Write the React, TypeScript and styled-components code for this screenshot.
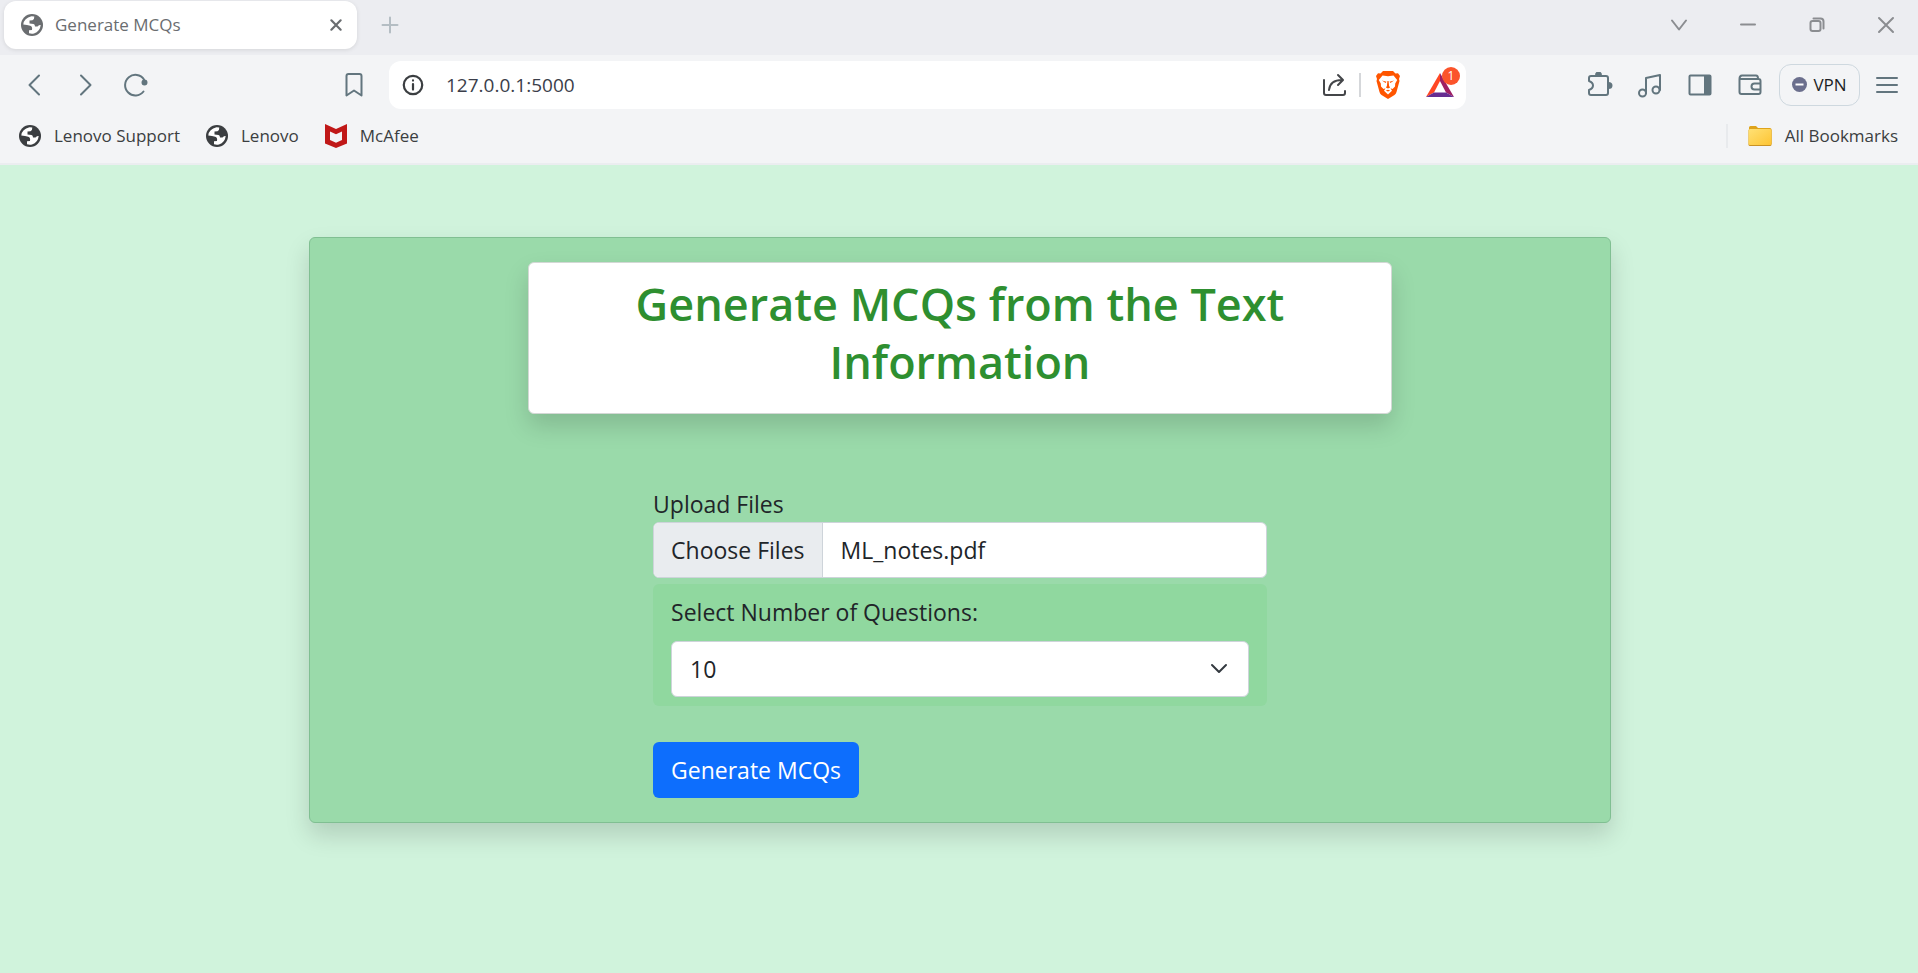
import React, { useState } from 'react';
import styled, { createGlobalStyle } from 'styled-components';

const GlobalStyle = createGlobalStyle`
  *, *::before, *::after { box-sizing: border-box; }
  html, body { margin: 0; min-height: 100%; background: #d0f3dc; }
  body, button, input, select { font-family: 'Open Sans', 'Noto Sans', sans-serif; }
  h1, form { margin: 0; }
`;

const Window = styled.div`
  min-height: 100vh;
  display: flex;
  flex-direction: column;
  color: #212529;
`;

const TabStrip = styled.div`
  display: flex;
  align-items: flex-start;
  justify-content: space-between;
  height: 55px;
  padding: 1px 7px 0 4px;
  background: #ecedf1;
`;

const Row = styled.div<{ $gap?: number }>`
  display: flex;
  align-items: center;
  gap: ${(p) => p.$gap ?? 0}px;
`;

const Tab = styled.div`
  display: flex;
  align-items: center;
  width: 353px;
  height: 48px;
  padding: 0 10px 0 17px;
  gap: 12px;
  border-radius: 12px;
  background: #fff;
  box-shadow: 0 1px 4px rgba(0, 0, 0, 0.1);
  color: #6a6d70;
  font-size: 17px;
`;

const TabTitle = styled.span`
  flex: 1;
  padding-bottom: 2px;
`;

const IconButton = styled.button<{ $width?: number; $color?: string }>`
  display: flex;
  align-items: center;
  justify-content: center;
  flex: none;
  width: ${(p) => p.$width ?? 50}px;
  height: 48px;
  padding: 0;
  border: 0;
  background: none;
  color: ${(p) => p.$color ?? '#62757e'};
`;

const Toolbar = styled.div`
  display: flex;
  align-items: center;
  justify-content: space-between;
  height: 60px;
  padding: 0 8px 0 10px;
  background: #f3f4f6;
`;

const NavGroup = styled(Row)`
  flex: 0 0 319px;
`;

const AddressArea = styled(Row)`
  flex: 0 1 1456px;
`;

const AddressBar = styled.div`
  display: flex;
  align-items: center;
  flex: 1;
  height: 48px;
  margin-left: 10px;
  padding: 0 1px 0 12px;
  border-radius: 12px;
  background: #fff;
`;

const AddressInput = styled.input`
  flex: 1;
  min-width: 0;
  height: 40px;
  padding: 0 21px;
  border: 0;
  outline: 0;
  background: none;
  color: #3b3e4a;
  font-size: 19px;
`;

const Divider = styled.span<{ $color: string }>`
  width: 2px;
  height: 24px;
  background: ${(p) => p.$color};
`;

const BadgeHost = styled(IconButton)`
  position: relative;
`;

const Badge = styled.span`
  position: absolute;
  top: 6px;
  right: 5px;
  width: 18px;
  height: 18px;
  border-radius: 9px;
  background: #fb542b;
  color: #fff;
  font-size: 12px;
  line-height: 18px;
`;

const VpnButton = styled.button`
  display: flex;
  align-items: center;
  justify-content: center;
  gap: 6px;
  width: 81px;
  height: 42px;
  margin: 0 4px 0 4px;
  padding: 0 0 2px;
  border: 1px solid #ced8df;
  border-radius: 12px;
  background: none;
  color: #1d1f25;
  font-size: 17px;
`;

const Bookmarks = styled.nav`
  display: flex;
  align-items: center;
  justify-content: space-between;
  height: 50px;
  padding: 0 20px 6px 19px;
  background: #f3f4f6;
  border-bottom: 2px solid #ebedf0;
`;

const Bookmark = styled.a`
  display: flex;
  align-items: center;
  gap: 13px;
  color: #3b3e41;
  font-size: 17px;
  text-decoration: none;
`;

const BookmarkName = styled.span`
  padding-bottom: 2px;
`;

const Page = styled.main`
  flex: 1;
  display: flex;
  flex-direction: column;
  align-items: center;
  padding: 72px 0 24px 2px;
`;

const Card = styled.section`
  display: flex;
  flex-direction: column;
  align-items: center;
  width: 68%;
  padding: 24px;
  border: 1px solid #80bf92;
  border-radius: 6px;
  background: #9adaaa;
  box-shadow: 0 12px 24px rgba(0, 0, 0, 0.15);
`;

const TitleBox = styled.header`
  width: 69%;
  padding: 12px 96px 22px;
  border: 1px solid #d3d8d5;
  border-radius: 6px;
  background: #fff;
  box-shadow: 0 12px 24px rgba(0, 0, 0, 0.15);
  text-align: center;
`;

const Title = styled.h1`
  color: #2e8f30;
  font-size: 45px;
  font-weight: 600;
  line-height: 58px;
`;

const Form = styled.form`
  display: flex;
  flex-direction: column;
  align-items: flex-start;
  width: 49%;
  margin-top: 72px;
  font-size: 23px;
  line-height: 36px;
`;

const FilePicker = styled.label`
  position: relative;
  display: flex;
  width: 100%;
  height: 56px;
  overflow: hidden;
  border: 1px solid #ced4da;
  border-radius: 6px;
  background: #fff;
  line-height: 54px;
`;

const FileInput = styled.input`
  position: absolute;
  inset: 0;
  width: 100%;
  opacity: 0;
`;

const ChooseFiles = styled.span`
  padding: 0 17px;
  border-right: 1px solid #ced4da;
  background: #e9ecef;
`;

const FileName = styled.span`
  padding: 0 18px;
`;

const QuestionPanel = styled.div`
  display: flex;
  flex-direction: column;
  gap: 11px;
  width: 100%;
  margin: 6px 0 36px;
  padding: 10px 18px 9px;
  border-radius: 6px;
  background: #90d89f;
`;

const SelectWrap = styled.div`
  display: grid;
  align-items: center;
  & > * { grid-area: 1 / 1; }
  & > svg { justify-self: end; margin-right: 20px; pointer-events: none; }
`;

const Select = styled.select`
  appearance: none;
  width: 100%;
  height: 56px;
  padding: 0 18px;
  border: 1px solid #ced4da;
  border-radius: 6px;
  background: #fff;
  color: #212529;
  font-size: 23px;
`;

const Submit = styled.button`
  height: 56px;
  padding: 0 18px;
  border: 0;
  border-radius: 6px;
  background: #0d6efd;
  color: #fff;
  font-size: 23px;
`;

type StrokeProps = { size?: number; width?: number; children: React.ReactNode };

const Stroke = ({ size = 26, width = 2, children }: StrokeProps) => (
  <svg width={size} height={size} viewBox="0 0 26 26" fill="none" stroke="currentColor" strokeWidth={width} strokeLinecap="round" strokeLinejoin="round" aria-hidden="true">
    {children}
  </svg>
);

const Globe = () => (
  <svg width="22" height="22" viewBox="0 0 22 22" aria-hidden="true">
    <circle cx="11" cy="11" r="11" fill="currentColor" />
    <path fill="#fff" d="M2.300 10.500Q3 4 10.500 2.300L13.300 2.600Q13.500 5.500 11.500 6.300L8.500 6.500V9.500L12.500 10q1.500.3 1.500 2.500h2.500q1.200-2 3.200-1.500Q19 17.500 13 19.500 10.500 20 8 19.300V16.200l3-.2q.7-3.500-1.800-4.200L6 11z" />
  </svg>
);

const McAfee = () => (
  <svg width="22" height="24" viewBox="0 0 22 24" aria-hidden="true">
    <path fill="#c01818" d="M0 0l11 5L22 0v19.500L11 24 0 19.500zM5 7.500v8.500l6 2.800 6-2.800V7.500L11 10.300z" fillRule="evenodd" />
  </svg>
);

const Folder = () => (
  <svg width="24" height="20" viewBox="0 0 24 20" aria-hidden="true">
    <defs>
      <linearGradient id="folder" x1="0" y1="0" x2="1" y2="1">
        <stop offset="0" stopColor="#ffe175" />
        <stop offset="1" stopColor="#fdc433" />
      </linearGradient>
    </defs>
    <path fill="#dea31b" d="M1 1.500Q1 0 2.500 0H8l2 2h12q1.500 0 1.500 1.500V18H1z" />
    <rect x="0.500" y="3" width="23" height="17" rx="1.500" fill="#c99224" />
    <rect x="0.500" y="3" width="23" height="16" rx="1.500" fill="url(#folder)" />
  </svg>
);

const Lion = () => (
  <svg width="24" height="28" viewBox="0 0 24 28" aria-hidden="true">
    <path fill="#ff5500" d="M7 0h10l2.500 2.500L22 2.200 24 5l-1 3 .5 2-3 11q-.5 2-2 3L12 28l-6.500-4q-1.500-1-2-3L.5 10 1 8 0 5l2-2.800 2.500.3z" />
    <path fill="#fff" d="M6.500 4.500l5.500.8 5.500-.8 3.700 4.500-2 3.500-.2 3-2.500 2.500-2-.7 1.500 2.500-4 3.700-4-3.700 1.500-2.500-2 .7L5 15.500l-.2-3-2-3.500z" />
    <path fill="#ff5500" d="M6 9.500l4.500 1.300-1 1.200zM18 9.500l-4.500 1.300 1 1.200zM11.400 10h1.200l.5 5 1 1.500L12 17.500l-2.100-1 1-1.500zM9.800 19.500l2.200-.8 2.200.8-2.200 1z" />
  </svg>
);

const Triangle = () => (
  <svg width="28" height="24" viewBox="0 0 28 24" aria-hidden="true">
    <path fill="#ff4724" d="M14 0v8L8 19.500 0 24z" />
    <path fill="#9e1f63" d="M14 0v8l6 11.500 8 4.500z" />
    <path fill="#662d91" d="M0 24l8-4.500h12l8 4.500z" />
  </svg>
);

export default function App() {
  const [url, setUrl] = useState('127.0.0.1:5000');
  const [count, setCount] = useState('10');
  const [fileName, setFileName] = useState('ML_notes.pdf');

  return (
    <>
      <GlobalStyle />
      <Window>
        <TabStrip>
          <Row $gap={8}>
            <Tab>
              <Globe />
              <TabTitle>Generate MCQs</TabTitle>
              <IconButton $width={22} $color="#6a6d70" aria-label="Close tab">
                <Stroke size={22} width={2.6}><path d="M7.500 7.500l11 11M18.500 7.500l-11 11" /></Stroke>
              </IconButton>
            </Tab>
            <IconButton aria-label="New tab" $color="#b4bdc3">
              <Stroke><path d="M13 5.500v15M5.500 13h15" /></Stroke>
            </IconButton>
          </Row>
          <Row $gap={19}>
            <IconButton aria-label="Search tabs" $color="#8b8d91"><Stroke><path d="M6 8.500l7 9 7-9" /></Stroke></IconButton>
            <IconButton aria-label="Minimize" $color="#8b8d91"><Stroke><path d="M6 12.500h14" /></Stroke></IconButton>
            <IconButton aria-label="Restore" $color="#8b8d91">
              <Stroke><rect x="6.500" y="9" width="10" height="10" rx="2" /><path d="M9.500 6.500h7q3 0 3 3v7" /></Stroke>
            </IconButton>
            <IconButton aria-label="Close" $color="#8b8d91"><Stroke><path d="M6 6l14 14M20 6L6 20" /></Stroke></IconButton>
          </Row>
        </TabStrip>

        <Toolbar>
          <AddressArea>
            <NavGroup>
              <IconButton aria-label="Back"><Stroke><path d="M17 3.500L7.500 13l9.500 9.500" /></Stroke></IconButton>
              <IconButton aria-label="Forward"><Stroke><path d="M9 3.500l9.500 9.500L9 22.500" /></Stroke></IconButton>
              <IconButton aria-label="Reload">
                <Stroke><path d="M21.500 19.500A10.300 10.300 0 1 1 22 7.500" /><circle cx="22.500" cy="10.500" r="2" fill="currentColor" /></Stroke>
              </IconButton>
            </NavGroup>
            <IconButton aria-label="Bookmark this page"><Stroke><path d="M5.500 4q0-2 2-2h11q2 0 2 2v19.500l-7.500-5-7.500 5z" /></Stroke></IconButton>
            <AddressBar>
              <IconButton $width={24} aria-label="Site information" $color="#3b3e41">
                <Stroke size={24} width={2.4}><circle cx="13" cy="13" r="10" /><path d="M13 12v6M13 8v.2" /></Stroke>
              </IconButton>
              <AddressInput aria-label="Address" value={url} onChange={(e) => setUrl(e.target.value)} />
              <IconButton aria-label="Share" $color="#444649">
                <Stroke><path d="M3 8v13q0 2 2 2h17q2 0 2-2v-2M8 18Q9 8 21 8M17 3l5 5-5 5" /></Stroke>
              </IconButton>
              <Divider $color="#d5d7da" />
              <IconButton $width={54} aria-label="Brave Shields"><Lion /></IconButton>
              <BadgeHost $width={50} aria-label="Brave Rewards"><Triangle /><Badge>1</Badge></BadgeHost>
            </AddressBar>
          </AddressArea>
          <Row>
            <IconButton aria-label="Extensions">
              <Stroke>
                <path d="M4 4h15q2 0 2 2v15q0 2-2 2H4q-2 0-2-2v-3q4-1.500 4-4.500T2 9V6q0-2 2-2z" />
                <path d="M9 3.500q0-3 2.500-3t2.500 3zM21.500 11q3 0 3 2.500t-3 2.500z" fill="currentColor" />
              </Stroke>
            </IconButton>
            <IconButton aria-label="Media">
              <Stroke><circle cx="5.500" cy="21" r="3.500" /><circle cx="19" cy="18" r="3.500" /><path d="M9 21V6l14-3v15" /></Stroke>
            </IconButton>
            <IconButton aria-label="Sidebar">
              <Stroke><rect x="2.500" y="3.500" width="21" height="19" rx="1" /><path d="M18 4h5v18h-5z" fill="currentColor" /></Stroke>
            </IconButton>
            <IconButton aria-label="Wallet">
              <Stroke><path d="M2.500 7V20q0 2 2 2h17q2 0 2-2V9q0-2-2-2h-19q0-3.500 2.500-3.500h14q2 0 2 3M23.500 11.500h-6q-3 0-3 3t3 3h6" /></Stroke>
            </IconButton>
            <VpnButton>
              <svg width="15" height="15" viewBox="0 0 15 15" aria-hidden="true">
                <circle cx="7.500" cy="7.500" r="7.500" fill="#6b6f8d" /><path d="M3.500 6.500h8v2h-8z" fill="#fff" />
              </svg>
              VPN
            </VpnButton>
            <IconButton $width={46} aria-label="Menu"><Stroke><path d="M3 6h20M3 13h20M3 20h20" /></Stroke></IconButton>
          </Row>
        </Toolbar>

        <Bookmarks>
          <Row $gap={26}>
            <Bookmark href="#"><Globe /><BookmarkName>Lenovo Support</BookmarkName></Bookmark>
            <Bookmark href="#"><Globe /><BookmarkName>Lenovo</BookmarkName></Bookmark>
            <Bookmark href="#"><McAfee /><BookmarkName>McAfee</BookmarkName></Bookmark>
          </Row>
          <Row $gap={20}>
            <Divider $color="#e8eaed" />
            <Bookmark href="#"><Folder /><BookmarkName>All Bookmarks</BookmarkName></Bookmark>
          </Row>
        </Bookmarks>

        <Page>
          <Card>
            <TitleBox><Title>Generate MCQs from the Text Information</Title></TitleBox>
            <Form onSubmit={(e) => e.preventDefault()}>
              <label htmlFor="files">Upload Files</label>
              <FilePicker>
                <ChooseFiles>Choose Files</ChooseFiles>
                <FileName>{fileName}</FileName>
                <FileInput id="files" type="file" multiple onChange={(e) => setFileName(e.target.files?.[0]?.name ?? '')} />
              </FilePicker>
              <QuestionPanel>
                <label htmlFor="count">Select Number of Questions:</label>
                <SelectWrap>
                  <Select id="count" value={count} onChange={(e) => setCount(e.target.value)}>
                    <option>5</option>
                    <option>10</option>
                    <option>15</option>
                    <option>20</option>
                  </Select>
                  <svg width="20" height="20" viewBox="0 0 20 20" fill="none" stroke="#343a40" strokeWidth="2" strokeLinecap="round" strokeLinejoin="round" aria-hidden="true">
                    <path d="M3 6l7 7 7-7" />
                  </svg>
                </SelectWrap>
              </QuestionPanel>
              <Submit type="submit">Generate MCQs</Submit>
            </Form>
          </Card>
        </Page>
      </Window>
    </>
  );
}
